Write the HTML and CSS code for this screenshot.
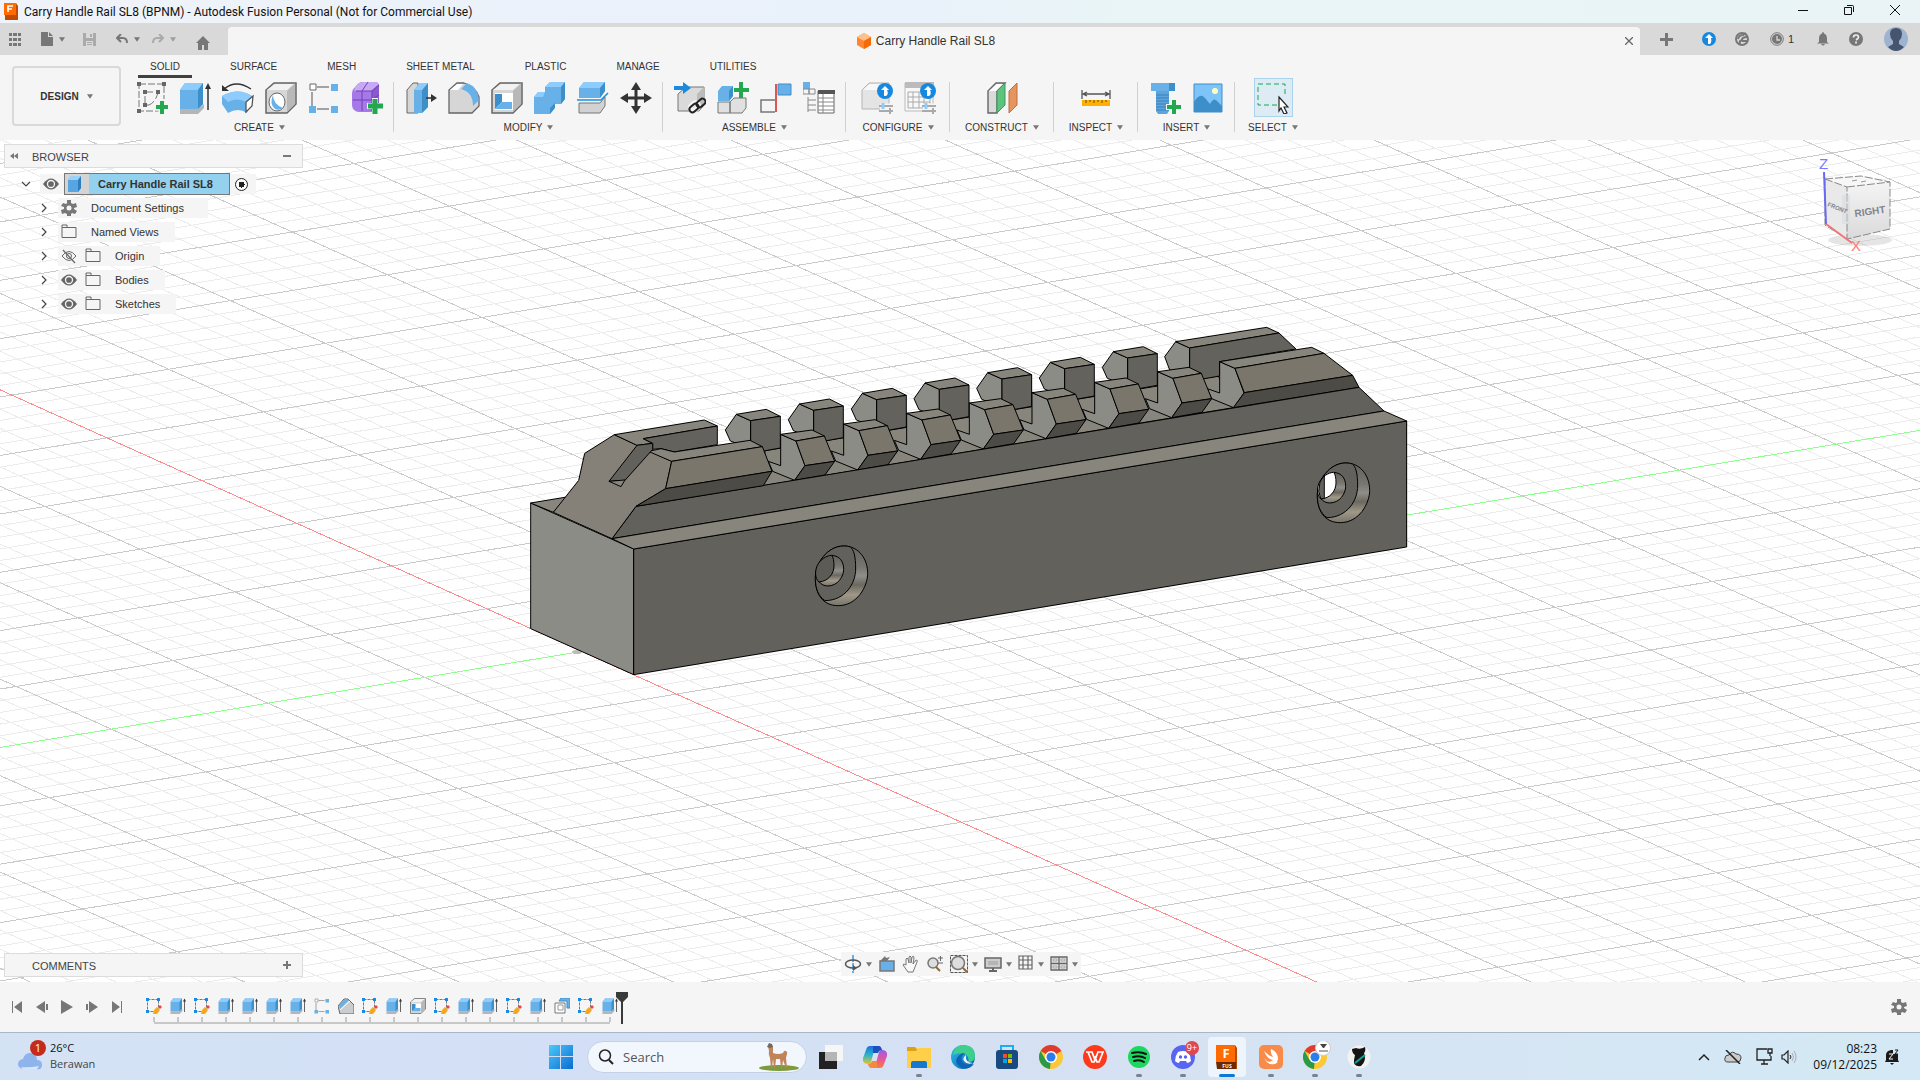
FILE: index.html
```html
<!DOCTYPE html>
<html lang="en">
<head>
<meta charset="utf-8">
<title>Carry Handle Rail SL8 (BPNM) - Autodesk Fusion Personal</title>
<link rel="stylesheet" href="styles.css">
</head>
<body>
<svg class="sprite" aria-hidden="true">
  <defs>
    <linearGradient id="g-blue" x1="0" y1="0" x2="1" y2="1"><stop offset="0" stop-color="#4cc9fb"/><stop offset="1" stop-color="#0a6cd0"/></linearGradient>
    <linearGradient id="g-edge" x1="0" y1="0" x2="1" y2="1"><stop offset="0" stop-color="#2cc3f0"/><stop offset="1" stop-color="#0b59a8"/></linearGradient>
    <linearGradient id="g-copa" x1="0" y1="0" x2="0" y2="1"><stop offset="0" stop-color="#1b6fe0"/><stop offset=".5" stop-color="#2bb5c9"/><stop offset="1" stop-color="#e8c62a"/></linearGradient>
    <linearGradient id="g-copb" x1="0" y1="0" x2="0" y2="1"><stop offset="0" stop-color="#9a5be8"/><stop offset=".5" stop-color="#e2569b"/><stop offset="1" stop-color="#ff7a3c"/></linearGradient>
    <linearGradient id="g-cube" x1="0" y1="0" x2="0" y2="1"><stop offset="0" stop-color="#f4f4f4"/><stop offset="1" stop-color="#dadada"/></linearGradient>
    <linearGradient id="g-bore" x1="0" y1="0" x2="0" y2="1"><stop offset="0" stop-color="#62615b"/><stop offset=".35" stop-color="#77766f"/><stop offset=".5" stop-color="#8f8f8a"/><stop offset=".65" stop-color="#6c6860"/><stop offset=".82" stop-color="#a09888"/><stop offset="1" stop-color="#77746c"/></linearGradient>
  </defs>
  <symbol id="i-extrude" viewBox="0 0 32 32"><path d="M1 27h18l6-5v4l-6 6H1z" fill="#b5b5b5"/><path d="M1 8l5-7h18v21l-5 5H1z" fill="#68b0e8"/><path d="M1 8l5-7h18l-5 7z" fill="#8dccfc"/><path d="M19 8l5-7v21l-5 5z" fill="#3d8fca"/><path d="M29 28V3" stroke="#333" stroke-width="1.500"/><path d="M26 7l3-6 3 6z" fill="#333"/></symbol>
  <symbol id="i-sketch" viewBox="0 0 32 32"><path d="M3 2h25v27H3z" fill="none" stroke="#777" stroke-dasharray="7 2"/><path d="M9 23V10h13q-2 10-9 13z" fill="none" stroke="#777" stroke-dasharray="9 3"/><path d="M1 0h4v4H1zM26 0h4v4h-4zM1 27h4v4H1zM7 8h4v4H7zM20 8h4v4h-4zM7 21h4v4H7z" fill="#666"/><path d="M18 25h14M26 17v15" stroke="#f5f5f5" stroke-width="7"/><path d="M20 25h12M26 19v13" stroke="#22a94f" stroke-width="4"/></symbol>
  <symbol id="i-revolve" viewBox="0 0 32 32"><path d="M0 14q16-9 30 0l-5 17q-9-6-19 0L0 22z" fill="#68b0e8"/><path d="M0 14q16-9 30 0l-6 6q-9-5-18 0z" fill="#8dccfc"/><path d="M24 20l7-6-1 10-6 6z" fill="#fff" stroke="#555" stroke-width="1.300"/><path d="M2 7Q14-3 29 7" fill="none" stroke="#333" stroke-width="1.300"/><path d="M0 3v6h7z" fill="#333"/></symbol>
  <symbol id="i-hole" viewBox="0 0 32 32"><path d="M1 8l8-7h22v21l-9 9H1z" fill="#d6d6d6" stroke="#666" stroke-width="1.500"/><path d="M22 9l8-8v21l-8 8z" fill="#b8b8b8"/><path d="M2 8l8-6h19l-7 6z" fill="#f2f2f2"/><ellipse cx="12" cy="20" rx="8" ry="9" fill="#fff" stroke="#666"/><path d="M8 13q0 9 10 13-4 3-8 1-6-5-2-14z" fill="#68b0e8"/></symbol>
  <symbol id="i-pattern" viewBox="0 0 32 32"><path d="M9 5h12M4 10v14M9 27h12" stroke="#888" fill="none" stroke-width="1.500"/><path d="M2 2h6v6H2z" fill="#fff" stroke="#666"/><path d="M23 2h7v7h-7zM1 24h7v7H1zM23 24h7v7h-7z" fill="#68b0e8"/></symbol>
  <symbol id="i-form" viewBox="0 0 32 32"><rect x="1" y="4" width="26" height="26" rx="7" fill="#a678e8"/><path d="M3 8q3-8 9-8h12q5 0 4 7v14l-7 8V9z" fill="#8a5bd0"/><path d="M3 8q3-8 9-8h12q4 0 3 3l-7 6H4z" fill="#c9a8f6"/><path d="M2 18h18l8-5M11 9v20M11 9l6-9M21 9v20M5 9h16l7-6" fill="none" stroke="#6f42b5"/><path d="M16 24h16M24 16v16" stroke="#f5f5f5" stroke-width="6"/><path d="M17 24h15M24 17v15" stroke="#22a94f" stroke-width="5"/></symbol>
  <symbol id="i-press" viewBox="0 0 32 32"><path d="M2 8l6-7h5v30H2z" fill="#d6d6d6" stroke="#666"/><path d="M9 8l6-7h8v24l-6 6H9z" fill="#68b0e8"/><path d="M17 8l6-7v24l-6 6z" fill="#3d8fca"/><path d="M9 8l6-7h8l-6 7z" fill="#8dccfc"/><path d="M21 16h7" stroke="#333" stroke-width="1.500"/><path d="M26 12l6 4-6 4z" fill="#333"/></symbol>
  <symbol id="i-fillet" viewBox="0 0 32 32"><path d="M1 8l8-7h7q12 4 15 14v9l-7 7H1z" fill="#d6d6d6" stroke="#666" stroke-width="1.300"/><path d="M13 7l6-6q11 4 12 17l-6 6Q25 10 13 7z" fill="#68b0e8"/><path d="M2 8l7-6h6l-5 6z" fill="#fff"/></symbol>
  <symbol id="i-shell" viewBox="0 0 32 32"><path d="M1 8l8-7h22v21l-9 9H1z" fill="#d6d6d6" stroke="#666" stroke-width="1.500"/><path d="M22 9l8-8v21l-8 8z" fill="#b8b8b8"/><path d="M2 8l8-6h19l-7 6z" fill="#f2f2f2"/><path d="M4 11h18v17H4z" fill="#fff"/><path d="M4 12h7v8l-7 7z" fill="#3d8fca"/><path d="M4 27l7-7h10v7z" fill="#68b0e8"/></symbol>
  <symbol id="i-combine" viewBox="0 0 32 32"><path d="M0 15l4-5h7V5l5-5h15v17l-4 5h-7v5l-4 5H0z" fill="#68b0e8"/><path d="M0 15l4-5h7L9 15zM11 5l5-5h15l-4 5z" fill="#8dccfc"/><path d="M27 5l4-5v17l-4 5zM16 26l5-5v5l-5 6z" fill="#3d8fca"/></symbol>
  <symbol id="i-split" viewBox="0 0 32 32"><path d="M2 6l5-6h21v9l-5 7H2z" fill="#68b0e8"/><path d="M2 6l5-6h21l-5 6z" fill="#8dccfc"/><path d="M23 6l5-6v9l-5 7z" fill="#3d8fca"/><path d="M0 18h24l7-7" fill="none" stroke="#1593e8" stroke-width="1.500"/><path d="M2 21h21l5-6v9l-5 7H2z" fill="#d2d2d2" stroke="#777"/></symbol>
  <symbol id="i-move" viewBox="0 0 32 32"><path d="M16 3v26M3 16h26" stroke="#333" stroke-width="3"/><path d="M16 0l5 8H11zM16 32l5-8H11zM0 16l8-5v10zM32 16l-8-5v10z" fill="#333"/></symbol>
  <symbol id="i-insertc" viewBox="0 0 32 32"><path d="M4 12l8-7h18v18l-5 6H4z" fill="#dadada" stroke="#777"/><path d="M23 12l7-7v18l-7 6z" fill="#bbb"/><path d="M0 4h9V0l8 6-8 6V8H0z" fill="#1a8ae0"/><g fill="none" stroke="#f5f5f5" stroke-width="5"><rect x="16" y="22" width="9" height="6" rx="3" transform="rotate(-40 20 25)"/></g><g fill="none" stroke="#222" stroke-width="2"><rect x="15" y="23" width="10" height="6" rx="3" transform="rotate(-42 20 26)"/><rect x="22" y="18" width="10" height="6" rx="3" transform="rotate(-42 27 21)"/></g></symbol>
  <symbol id="i-newcomp" viewBox="0 0 32 32"><path d="M1 20h12v11H1zM13 20l4-4h12v10l-4 5H13z" fill="#e0e0e0" stroke="#777"/><path d="M1 9l4-5h11v10l-4 5H1z" fill="#68b0e8"/><path d="M12 9l4-5v10l-4 5z" fill="#3d8fca"/><path d="M17 8h15M24 0v16" stroke="#22a94f" stroke-width="4"/></symbol>
  <symbol id="i-joint" viewBox="0 0 32 32"><path d="M15 18H1v12h14" fill="none" stroke="#777" stroke-width="1.500"/><path d="M16 2v28" stroke="#d32020" stroke-width="1.500"/><path d="M18 2h13v11H18z" fill="#68b0e8" stroke="#3d8fca"/></symbol>
  <symbol id="i-bom" viewBox="0 0 32 32"><path d="M0 0h7v7H0z" fill="#68b0e8"/><path d="M0 7h6v5H0zM6 7h6v5H6zM5 15v15M5 18h8M5 23h8M5 28h8" fill="none" stroke="#888"/><path d="M15 9h16v22H15z" fill="#fff" stroke="#666"/><path d="M15 8h17v4H15z" fill="#555"/><path d="M15 16h16M15 20h16M15 24h16M15 28h16M20 12v19" stroke="#888"/></symbol>
  <symbol id="i-conf1" viewBox="0 0 32 32"><path d="M1 8l7-7h20v26H1z" fill="#e4e4e4" stroke="#b5b5b5"/><path d="M2 8l7-6h15l-4 6z" fill="#f8f8f8"/><circle cx="24" cy="9" r="8" fill="#1788e0"/><path d="M23 14V8h-3l4-4 4 4h-2q2 4-1 6z" fill="#fff"/><path d="M19 24h13M19 29h13" stroke="#f5f5f5" stroke-width="5"/><path d="M18 24h14M18 29h14M29 26v6" stroke="#aaa" stroke-width="2"/><path d="M22 21v6" stroke="#8dccfc" stroke-width="3"/></symbol>
  <symbol id="i-conf2" viewBox="0 0 32 32"><path d="M1 1h28v28H1z" fill="#f8f8f8" stroke="#bbb"/><path d="M1 0h29v6H1z" fill="#bbb"/><path d="M4 10h22v16H4zM4 15h22M4 20h22M9 10v16M15 10v16M20 10v16" fill="none" stroke="#aaa"/><circle cx="24" cy="9" r="8" fill="#1788e0"/><path d="M23 14V8h-3l4-4 4 4h-2q2 4-1 6z" fill="#fff"/><path d="M19 24h13M19 29h13" stroke="#f5f5f5" stroke-width="5"/><path d="M18 24h14M18 29h14M29 26v6" stroke="#aaa" stroke-width="2"/><path d="M22 21v6" stroke="#8dccfc" stroke-width="3"/></symbol>
  <symbol id="i-construct" viewBox="0 0 32 32"><path d="M2 9l8-8h9l-8 8v22H2z" fill="#dadada" stroke="#666" stroke-width="1.400"/><path d="M3 9l8-7h6l-7 7z" fill="#fff"/><path d="M11 9l8-8v22l-8 8z" fill="#5cc47c" stroke="#3a9a5a"/><path d="M23 9l8-8v22l-8 8z" fill="#e8945e" stroke="#b9713f"/></symbol>
  <symbol id="i-measure" viewBox="0 0 32 32"><path d="M2 8v9M30 8v9M4 12h24M7 10l-4 2 4 2M25 10l4 2-4 2" fill="none" stroke="#555" stroke-width="1.300"/><path d="M2 18h28v6H2z" fill="#ffb000"/><path d="M6 18v3M10 18v2M14 18v3M18 18v2M22 18v3M26 18v2" stroke="#6a4a00"/></symbol>
  <symbol id="i-bolt" viewBox="0 0 32 32"><path d="M2 1h24v8H2z" fill="#3d8fca"/><path d="M2 1h18v8H2z" fill="#68b0e8"/><path d="M7 9h13v20l-2 3H9l-2-3z" fill="#5ba4dc"/><path d="M7 13h13M7 16h13M7 19h13M7 22h13M7 25h13M7 28h13" stroke="#3d80b8"/><path d="M17 25h15M25 18v14" stroke="#f5f5f5" stroke-width="6"/><path d="M18 25h14M25 18v14" stroke="#22a94f" stroke-width="4"/></symbol>
  <symbol id="i-image" viewBox="0 0 32 32"><path d="M2 2h28v28H2z" fill="#7fc4f8" stroke="#3d8fca"/><circle cx="23" cy="9" r="3" fill="#ffffc0"/><path d="M2 20q6-10 11-4l5 6q4-8 8-2l4 4v6H2z" fill="#3d8fca"/></symbol>
  <symbol id="i-select" viewBox="0 0 32 32"><path d="M1 2h27v21H1z" fill="none" stroke="#12ab50" stroke-dasharray="5 3"/><path d="M21 13h11v19H21z" fill="#dcebf4"/><path d="M22 15l9 10h-4l3 6-3 1-3-6-2 3z" fill="#fff" stroke="#222" stroke-width="1.200"/></symbol>
  <symbol id="t-sketch" viewBox="0 0 16 16"><path d="M1.500 1.500h11v12h-11z" fill="none" stroke="#777" stroke-dasharray="3 1"/><path d="M0 0h3v3H0zM11 0h3v3h-3zM0 12h3v3H0z" fill="#1a8ae0"/><path d="M7 16l1-4 3-3 3 3-3 4z" fill="#f5a81c"/><path d="M12 9l2-2 2 2-2 2z" fill="#e44"/></symbol>
  <symbol id="t-chamfer" viewBox="0 0 16 16"><path d="M0 8l6-7h4l6 6v9H2z" fill="#ccc" stroke="#666"/><path d="M2 11l9-9-4-1-6 6z" fill="#68b0e8"/><path d="M2 12L12 3" stroke="#fff"/></symbol>
  <symbol id="t-offset" viewBox="0 0 16 16"><path d="M7 0h9v10h-3V3H5z" fill="#68b0e8" stroke="#3d8fca"/><path d="M1 5h10v10H1z" fill="#fff" stroke="#777"/><path d="M4 7h5v5H4z" fill="none" stroke="#999"/></symbol>
  <symbol id="i-folder" viewBox="0 0 16 16"><path d="M1 3.500h14v10H1zM1 3.500V1h5v2.500" fill="none" stroke="#666"/></symbol>
  <symbol id="i-eye" viewBox="0 0 16 16"><path d="M0 8q8-11 16 0-8 11-16 0z" fill="#666"/><circle cx="8" cy="8" r="3.500" fill="none" stroke="#f5f5f5" stroke-width="1.300"/></symbol>
  <symbol id="i-eyeoff" viewBox="0 0 16 16"><path d="M1 8q7-9 14 0-7 9-14 0z" fill="none" stroke="#666"/><circle cx="8" cy="8" r="2.500" fill="none" stroke="#666"/><path d="M2 2l12 13" stroke="#666" stroke-width="1.200"/></symbol>
  <symbol id="i-gear" viewBox="0 0 16 16"><path d="M6 0h4v3l2 1 3-1 1 4-3 1v1l3 2-2 3-3-1-1 1v2H6v-2l-2-1-3 1-1-4 3-1V7L0 6l2-3 3 1 1-1z" fill="#777"/><circle cx="8" cy="8" r="2.500" fill="#f5f5f5"/></symbol>
  <symbol id="i-chev" viewBox="0 0 8 12"><path d="M2 2l4 4-4 4" fill="none" stroke="#444" stroke-width="1.200"/></symbol>
  <symbol id="i-down" viewBox="0 0 8 6"><path d="M0 0h8L4 6z" fill="#777"/></symbol>
  <symbol id="i-chrome" viewBox="0 0 24 24"><circle cx="12" cy="12" r="12" fill="#fcc934"/><path d="M12 12L1.600 6a12 12 0 0 1 20.800 0z" fill="#e03b2f"/><path d="M12 12l-1 12A12 12 0 0 1 1.600 6l5 9z" fill="#2a9a48"/><circle cx="12" cy="12" r="6" fill="#fff"/><circle cx="12" cy="12" r="4.500" fill="#2c7de9"/></symbol>
</svg>

<div class="app">
  <header class="titlebar">
    <svg class="applogo" viewBox="0 0 14 17"><path d="M1 0h11l2 3v14H1z" fill="#c24a00"/><path d="M0 0h12v12H0z" fill="#ff6b00"/><path d="M4 9V3h5M4 6h4" stroke="#fff" stroke-width="1.600" fill="none"/></svg>
    <h1>Carry Handle Rail SL8 (BPNM) - Autodesk Fusion Personal (Not for Commercial Use)</h1>
    <div class="winctl">
      <button aria-label="Minimize"><svg viewBox="0 0 10 10"><path d="M0 5.500h10" stroke="#111"/></svg></button>
      <button aria-label="Restore"><svg viewBox="0 0 10 10"><path d="M.5 2.500h7v7h-7zM3 .5h5.500q1 0 1 1V7" fill="none" stroke="#111"/></svg></button>
      <button aria-label="Close"><svg viewBox="0 0 10 10"><path d="M0 0l10 10M10 0L0 10" stroke="#111"/></svg></button>
    </div>
  </header>

  <div class="tabbar">
    <div class="quick">
      <button aria-label="Data panel"><svg width="12" height="13" viewBox="0 0 12 13"><path d="M0 0h3v3H0zM4 0h4v3H4zM9 0h3v3H9zM0 5h3v3H0zM4 5h4v3H4zM9 5h3v3H9zM0 10h3v3H0zM4 10h4v3H4zM9 10h3v3H9z" fill="#777"/></svg></button>
      <button class="q-file" aria-label="File"><svg width="12" height="14" viewBox="0 0 12 14"><path d="M0 0h7v5h5v9H0zM8 0l4 4H8z" fill="#777"/></svg><svg class="dd"><use href="#i-down"/></svg></button>
      <button class="q-save" aria-label="Save"><svg width="13" height="13" viewBox="0 0 13 13"><path d="M0 0h13v13H0z" fill="#aaa"/><path d="M3 0h7v5H3zM3 8h7v5H3z" fill="#d9d9d9"/><path d="M7 1h2v3H7zM4 9h5v1H4zM4 11h5v1H4z" fill="#aaa"/></svg></button>
      <button class="q-undo" aria-label="Undo"><svg width="12" height="10" viewBox="0 0 12 10"><path d="M2 4h5q4 0 4 5M5 0L1 4l4 4" fill="none" stroke="#777" stroke-width="2"/></svg><svg class="dd"><use href="#i-down"/></svg></button>
      <button class="q-redo" aria-label="Redo"><svg width="12" height="10" viewBox="0 0 12 10"><path d="M10 4H5Q1 4 1 9M7 0l4 4-4 4" fill="none" stroke="#aaa" stroke-width="2"/></svg><svg class="dd faded"><use href="#i-down"/></svg></button>
      <button class="q-home" aria-label="Home"><svg width="14" height="14" viewBox="0 0 14 14"><path d="M7 0l7 7h-2v7H8V9H6v5H2V7H0z" fill="#777"/></svg></button>
    </div>
    <div class="doctab">
      <svg width="14" height="16" viewBox="0 0 14 16"><path d="M7 0l7 4v8l-7 4-7-4V4z" fill="#ff8533"/><path d="M7 0l7 4-7 4-7-4z" fill="#ffc090"/><path d="M7 8l7-4v8l-7 4z" fill="#f96a05"/></svg>
      <span>Carry Handle Rail SL8</span>
      <button class="tabclose" aria-label="Close tab"><svg width="8" height="8" viewBox="0 0 8 8"><path d="M0 0l8 8M8 0L0 8" stroke="#666" stroke-width="1.300"/></svg></button>
    </div>
    <div class="status">
      <button class="c-plus" aria-label="New tab"><svg width="13" height="13" viewBox="0 0 13 13"><path d="M0 6.500h13M6.500 0v13" stroke="#777" stroke-width="3"/></svg></button>
      <button aria-label="Updates"><svg width="14" height="14" viewBox="0 0 14 14"><circle cx="7" cy="7" r="7" fill="#1788e0"/><path d="M6 12V6H3l4-4 4 4H9q1 4-1 6z" fill="#fff"/></svg></button>
      <button aria-label="Extensions"><svg width="14" height="14" viewBox="0 0 14 14"><circle cx="7" cy="7" r="6" fill="none" stroke="#777" stroke-width="2"/><path d="M3 7q1-4 5-4l3-2M7 8q0-3 5-3M5 12q-1-5 3-3l5 0" fill="none" stroke="#777" stroke-width="2"/></svg></button>
      <button class="c-jobs" aria-label="Job status"><svg width="14" height="14" viewBox="0 0 14 14"><circle cx="7" cy="7" r="6.300" fill="none" stroke="#777"/><circle cx="7" cy="7" r="5" fill="#777"/><path d="M7 4v4h3" fill="none" stroke="#d9d9d9" stroke-width="1.300"/></svg><span>1</span></button>
      <button aria-label="Notifications"><svg width="12" height="14" viewBox="0 0 12 14"><path d="M6 0q1 0 1 1.500 3 1 3 5V10l2 1.500H0L2 10V6.500q0-4 3-5Q5 0 6 0zM4 12h4q-2 3-4 0z" fill="#777"/></svg></button>
      <button aria-label="Help"><svg width="14" height="14" viewBox="0 0 14 14"><circle cx="7" cy="7" r="7" fill="#777"/><path d="M4.500 5.500Q4.500 3 7 3t2.500 2.300Q9.500 6.500 7 8M7 9.500v2" fill="none" stroke="#eee" stroke-width="1.700"/></svg></button>
      <button class="c-user" aria-label="Account"><svg width="24" height="24" viewBox="0 0 24 24"><circle cx="12" cy="12" r="12" fill="#9eb3d0"/><path d="M12 1q6 0 6 6 0 4-3 7v3l5 3q-4 4-8 4t-8-4l5-3v-3Q6 11 6 7q0-6 6-6z" fill="#46546e"/></svg></button>
    </div>
  </div>

  <section class="ribbon">
    <button class="workspace">DESIGN <svg class="dd"><use href="#i-down"/></svg></button>
    <div class="ribmain">
      <nav class="ribtabs">
        <button class="on">SOLID</button><button>SURFACE</button><button>MESH</button><button>SHEET METAL</button><button>PLASTIC</button><button>MANAGE</button><button>UTILITIES</button>
      </nav>
      <div class="groups">
        <div class="group g-create"><div class="tools">
          <button aria-label="Create sketch"><svg><use href="#i-sketch"/></svg></button><button aria-label="Extrude"><svg><use href="#i-extrude"/></svg></button><button aria-label="Revolve"><svg><use href="#i-revolve"/></svg></button><button aria-label="Hole"><svg><use href="#i-hole"/></svg></button><button aria-label="Pattern"><svg><use href="#i-pattern"/></svg></button><button aria-label="Create form"><svg><use href="#i-form"/></svg></button></div>
          <button class="glabel">CREATE <svg class="dd"><use href="#i-down"/></svg></button></div>
        <div class="group g-modify"><div class="tools">
          <button aria-label="Press pull"><svg><use href="#i-press"/></svg></button><button aria-label="Fillet"><svg><use href="#i-fillet"/></svg></button><button aria-label="Shell"><svg><use href="#i-shell"/></svg></button><button aria-label="Combine"><svg><use href="#i-combine"/></svg></button><button aria-label="Split body"><svg><use href="#i-split"/></svg></button><button aria-label="Move"><svg><use href="#i-move"/></svg></button></div>
          <button class="glabel">MODIFY <svg class="dd"><use href="#i-down"/></svg></button></div>
        <div class="group g-assemble"><div class="tools">
          <button aria-label="Insert component"><svg><use href="#i-insertc"/></svg></button><button aria-label="New component"><svg><use href="#i-newcomp"/></svg></button><button aria-label="Joint"><svg><use href="#i-joint"/></svg></button><button aria-label="Bill of materials"><svg><use href="#i-bom"/></svg></button></div>
          <button class="glabel">ASSEMBLE <svg class="dd"><use href="#i-down"/></svg></button></div>
        <div class="group g-configure"><div class="tools">
          <button aria-label="Configure"><svg><use href="#i-conf1"/></svg></button><button aria-label="Configuration table"><svg><use href="#i-conf2"/></svg></button></div>
          <button class="glabel">CONFIGURE <svg class="dd"><use href="#i-down"/></svg></button></div>
        <div class="group g-construct"><div class="tools"><button aria-label="Offset plane"><svg><use href="#i-construct"/></svg></button></div>
          <button class="glabel">CONSTRUCT <svg class="dd"><use href="#i-down"/></svg></button></div>
        <div class="group g-inspect"><div class="tools"><button aria-label="Measure"><svg><use href="#i-measure"/></svg></button></div>
          <button class="glabel">INSPECT <svg class="dd"><use href="#i-down"/></svg></button></div>
        <div class="group g-insert"><div class="tools"><button aria-label="Insert fastener"><svg><use href="#i-bolt"/></svg></button><button aria-label="Canvas"><svg><use href="#i-image"/></svg></button></div>
          <button class="glabel">INSERT <svg class="dd"><use href="#i-down"/></svg></button></div>
        <div class="group g-select"><div class="tools"><button class="active" aria-label="Select"><svg><use href="#i-select"/></svg></button></div>
          <button class="glabel">SELECT <svg class="dd"><use href="#i-down"/></svg></button></div>
      </div>
    </div>
  </section>

  <main class="viewport">
    <svg class="scene" viewBox="0 140 1920 842" preserveAspectRatio="xMinYMin slice">
      <defs>
        <g id="back-tooth">
          <path d="M676 390l33-47 43 19v85l-61-24z" fill="#8b8c85"/><path d="M709 343l90-15 42 21-89 13z" fill="#88867c"/><path d="M752 362l89-13v95l-89 16z" fill="#63625c"/>
        </g>
        <g id="front-face"><path d="M842 403l46 20 27 74-31 44-66-27-13-30 37 13z" fill="#8b8c85"/></g>
        <g id="front-tooth">
          <use href="#front-face"/>
          <path d="M842 403l94-13 37 18-85 15z" fill="#88867c"/><path d="M888 423l85-15 31 76-89 13z" fill="#7a766b"/><path d="M915 497l89-13-29 41-91 16z" fill="#4d4b45"/>
        </g>
        <g id="bore">
          <path d="M1031 738c48 0 72 42 72 82s-32 97-88 97c-48 0-69-36-69-82s37-97 85-97z" fill="url(#g-bore)"/>
          <path d="M1031 738q14 0 20 3c10 8 16 26 16 66 0 42-30 94-92 95-20-14-29-36-29-67 0-46 37-97 85-97z" fill="#62615b"/>
          <path d="M995 766c26 2 36 20 36 42s-18 50-48 50c-10 0-20-5-26-13" fill="url(#g-bore)"/>
          <path d="M995 766c5 6 7 17 7 32 0 24-18 46-45 48-14-12-12-36-4-52 8-14 24-27 42-28z" class="bore-hole"/>
        </g>
      </defs>
      <rect x="0" y="140" width="1920" height="842" fill="#fff"/>
      <g class="grid"><path id="grid-minor" class="minor"/><path id="grid-major" class="major"/><path id="axis-x" class="axis-x"/><path id="axis-y" class="axis-y"/></g>
      <ellipse cx="577" cy="652" rx="5" ry="2" fill="#bbb"/>
      <g class="body" transform="translate(500 300) scale(.33333)">
        <path d="M92 609l309 138v377L92 986z" fill="#8b8c85"/>
        <path d="M401 747l2319-384v378L401 1124z" fill="#62615b"/>
        <path d="M92 609l108-18-40 46z" fill="#88867c"/>
        <path d="M790 557l1410-234-45-95L795 452z" fill="#88867c"/>
        <use href="#back-tooth" x="1131" y="-188"/><use href="#back-tooth" x="942" y="-156"/><use href="#back-tooth" x="754" y="-125"/><use href="#back-tooth" x="566" y="-94"/><use href="#back-tooth" x="378" y="-63"/><use href="#back-tooth" x="189" y="-31"/><use href="#back-tooth"/>
        <path d="M1994 170l33-45 42 19v85l-60-19z" fill="#8b8c85"/>
        <path d="M2027 125l273-43 37 17-268 45z" fill="#88867c"/>
        <path d="M2069 144l268-45 51 48-229 38v43l-90 16z" fill="#63625c"/>
        <use href="#front-face" x="1317" y="-218"/>
        <path d="M2159 185l276-43 37 18-267 45z" fill="#88867c"/>
        <path d="M2205 205l267-45 86 66-325 52z" fill="#7a766b"/>
        <path d="M2233 278l325-52 19 36-377 61z" fill="#4d4b45"/>
        <use href="#front-tooth" x="1131" y="-188"/><use href="#front-tooth" x="942" y="-156"/><use href="#front-tooth" x="754" y="-125"/><use href="#front-tooth" x="566" y="-94"/><use href="#front-tooth" x="378" y="-63"/><use href="#front-tooth" x="189" y="-31"/><use href="#front-tooth"/>
        <path d="M336 716l72-97 2169-357 75 71z" fill="#62615b"/>
        <path d="M336 716l2316-383 68 30L401 747z" fill="#88867c"/>
        <path d="M160 637l76-96 18-81 89-56 172 80-18 82-89 53-72 97z" fill="#868178"/>
        <path d="M343 404l270-44 39 18-222 38 28 14-47 6z" fill="#88867c"/>
        <path d="M430 416l222-38v56l-129 22-40-10-25 2v-18z" fill="#63625c"/>
        <path d="M445 454l38-8 40 10 227-35 37 19-272 44z" fill="#88867c"/>
        <path d="M515 484l272-44 29 74-319 52z" fill="#7a766b"/>
        <path d="M497 566l319-52-26 43-382 62z" fill="#4d4b45"/>
        <path d="M411 436l47-6v18l-83 93-48 3z" fill="#62615b"/>
        <path d="M327 544l48-4-12 20z" fill="#88867c"/>
        <use href="#bore" class="blind"/><use href="#bore" class="through" x="1506" y="-249"/>
        <path d="M2473 526l-13 20-4 28 6 22h11z" fill="#62615b"/>
      </g>
    </svg>

    <svg class="viewcube" viewBox="0 0 90 110">
      <ellipse cx="50" cy="90" rx="32" ry="6" fill="#000" opacity=".1"/>
      <path d="M15 29l22 8v52L15 75z" fill="#e9e9e9"/><path d="M37 37l43-5v47l-43 10z" fill="url(#g-cube)"/><path d="M15 29l36-3 29 6-43 5z" fill="#f7f7f7"/>
      <path d="M15 29l22 8v52L15 75zM37 37l43-5v47l-43 10M15 29l36-3 29 6" fill="none" stroke="#888" stroke-dasharray="8 2"/>
      <path d="M32 45h8v29h-8z" fill="#d5d9de" opacity=".5"/>
      <path d="M14 22l2 52" stroke="#6a6af0" stroke-width="2"/><path d="M16 74l26 19" stroke="#f07878" stroke-width="2"/>
      <text x="9" y="19" class="ax z">Z</text><text x="41" y="101" class="ax x">X</text>
      <text x="45" y="67" class="face" transform="rotate(-8 45 67)">RIGHT</text>
      <text x="17" y="56" class="face small" transform="rotate(22 17 56)">FRONT</text>
      <path d="M42 31l5-1M51 32l5-1" stroke="#999"/>
    </svg>

    <aside class="browser">
      <div class="panelhead"><svg width="8" height="6" viewBox="0 0 8 6"><path d="M4 0v6L0 3zM8 0v6L4 3z" fill="#777"/></svg><h2>BROWSER</h2><button aria-label="Collapse"><svg width="8" height="8" viewBox="0 0 8 8"><path d="M0 4h8" stroke="#777" stroke-width="2"/></svg></button></div>
      <ul class="tree">
        <li class="root"><svg class="chev open"><use href="#i-chev"/></svg><div class="rowbg"><svg class="ic"><use href="#i-eye"/></svg><div class="sel"><span class="cubebox"><svg width="16" height="16" viewBox="0 0 16 16"><path d="M1 4l3-4h10v12l-3 4H1z" fill="#57a5e3"/><path d="M1 4l3-4h10l-3 4z" fill="#9bd2fb"/><path d="M11 4l3-4v12l-3 4z" fill="#2e7fc0"/></svg></span><b>Carry Handle Rail SL8</b></div><input type="radio" checked aria-label="Activate component"></div></li>
        <li><svg class="chev"><use href="#i-chev"/></svg><div class="rowbg"><svg class="ic"><use href="#i-gear"/></svg><span>Document Settings</span></div></li>
        <li><svg class="chev"><use href="#i-chev"/></svg><div class="rowbg short"><svg class="ic"><use href="#i-folder"/></svg><span>Named Views</span></div></li>
        <li><svg class="chev"><use href="#i-chev"/></svg><div class="rowbg short"><svg class="ic"><use href="#i-eyeoff"/></svg><svg class="ic"><use href="#i-folder"/></svg><span>Origin</span></div></li>
        <li><svg class="chev"><use href="#i-chev"/></svg><div class="rowbg short"><svg class="ic"><use href="#i-eye"/></svg><svg class="ic"><use href="#i-folder"/></svg><span>Bodies</span></div></li>
        <li><svg class="chev"><use href="#i-chev"/></svg><div class="rowbg short"><svg class="ic"><use href="#i-eye"/></svg><svg class="ic"><use href="#i-folder"/></svg><span>Sketches</span></div></li>
      </ul>
    </aside>

    <div class="comments panelhead"><h2>COMMENTS</h2><button aria-label="Add comment"><svg width="8" height="8" viewBox="0 0 8 8"><path d="M0 4h8M4 0v8" stroke="#777" stroke-width="2"/></svg></button></div>

    <div class="navbar">
      <button aria-label="Orbit"><svg width="18" height="18" viewBox="0 0 18 18"><path d="M9 0v18" stroke="#68b0e8" stroke-width="2" stroke-dasharray="7 1"/><ellipse cx="9" cy="9" rx="7.500" ry="4" fill="none" stroke="#555" stroke-width="1.500"/><path d="M9 10v6l4-3z" fill="#555"/></svg><svg class="dd"><use href="#i-down"/></svg></button>
      <button aria-label="Look at"><svg width="18" height="18" viewBox="0 0 18 18"><path d="M2 6h14v10H2z" fill="#68b0e8" stroke="#777" stroke-width="1.500"/><path d="M2 6l5-5 1 2 4-1-3 4z" fill="#777"/></svg></button>
      <button aria-label="Pan"><svg width="18" height="18" viewBox="0 0 18 18"><path d="M6 17L1 10q0-2 3 0V4q1-2 2 0l1 4V2q1-2 2 0v6l1-6q2-2 2 1l-1 6 3-4q2 0 1 2l-4 10z" fill="#f8f8f8" stroke="#777"/></svg></button>
      <button aria-label="Zoom"><svg width="18" height="18" viewBox="0 0 18 18"><circle cx="7" cy="8" r="5" fill="#ddd" stroke="#777" stroke-width="1.500"/><path d="M10 12l4 4" stroke="#8a6a3a" stroke-width="2"/><path d="M12 3h5M14.500 1v5M12 8h5" stroke="#666"/></svg></button>
      <button aria-label="Fit"><svg width="18" height="18" viewBox="0 0 18 18"><path d="M.5.5h17v17H.5z" fill="none" stroke="#555" stroke-dasharray="3 1"/><circle cx="8" cy="8" r="6.500" fill="#ddd" stroke="#777" stroke-width="1.500"/><path d="M13 13l4 4" stroke="#8a6a3a" stroke-width="2"/></svg><svg class="dd"><use href="#i-down"/></svg></button>
      <button aria-label="Display settings"><svg width="18" height="18" viewBox="0 0 18 18"><path d="M1 3h16v10H1z" fill="#ccc" stroke="#666" stroke-width="1.500"/><path d="M4 6h10v4H4z" fill="#b5b5b5"/><path d="M9 13v3M5 16h8" stroke="#666" stroke-width="2"/></svg><svg class="dd"><use href="#i-down"/></svg></button>
      <button aria-label="Grid and snaps"><svg width="16" height="18" viewBox="0 0 16 18"><path d="M1 1h13v13H1zM1 5h13M1 10h13M5 1v13M10 1v13" fill="none" stroke="#666" stroke-width="1.200"/></svg><svg class="dd"><use href="#i-down"/></svg></button>
      <button aria-label="Viewports"><svg width="18" height="18" viewBox="0 0 18 18"><path d="M1 2h16v13H1zM9 2v13M1 8.500h16" fill="#e2e2e2" stroke="#666" stroke-width="1.300"/><path d="M3 4h4v2H3zM11 4h4v2h-4zM3 11h4v2H3zM11 11h4v2h-4z" fill="none" stroke="#aaa"/></svg><svg class="dd"><use href="#i-down"/></svg></button>
    </div>
  </main>

  <section class="timeline">
    <div class="transport">
      <button aria-label="Go to start"><svg viewBox="0 0 14 14"><path d="M2 1h1v12H2zM12 1v12L4 7z" fill="#777"/></svg></button>
      <button aria-label="Step back"><svg viewBox="0 0 14 14"><path d="M10 1v12L1 7zM11 4h2v6h-2z" fill="#777"/></svg></button>
      <button aria-label="Play"><svg viewBox="0 0 14 14"><path d="M1 0v14l12-7z" fill="#777"/></svg></button>
      <button aria-label="Step forward"><svg viewBox="0 0 14 14"><path d="M4 1v12l9-6zM1 4h2v6H1z" fill="#777"/></svg></button>
      <button aria-label="Go to end"><svg viewBox="0 0 14 14"><path d="M11 1h1v12h-1zM2 1v12l8-6z" fill="#777"/></svg></button>
    </div>
    <ol class="features">
      <li><svg><use href="#t-sketch"/></svg></li><li><svg><use href="#i-extrude"/></svg></li><li><svg><use href="#t-sketch"/></svg></li><li><svg><use href="#i-extrude"/></svg></li><li><svg><use href="#i-extrude"/></svg></li><li><svg><use href="#i-extrude"/></svg></li><li><svg><use href="#i-extrude"/></svg></li><li><svg><use href="#i-pattern"/></svg></li><li><svg><use href="#t-chamfer"/></svg></li><li><svg><use href="#t-sketch"/></svg></li><li><svg><use href="#i-extrude"/></svg></li><li><svg><use href="#i-shell"/></svg></li><li><svg><use href="#t-sketch"/></svg></li><li><svg><use href="#i-extrude"/></svg></li><li><svg><use href="#i-extrude"/></svg></li><li><svg><use href="#t-sketch"/></svg></li><li><svg><use href="#i-extrude"/></svg></li><li><svg><use href="#t-offset"/></svg></li><li><svg><use href="#t-sketch"/></svg></li><li><svg><use href="#i-extrude"/></svg></li>
    </ol>
    <svg class="marker" viewBox="0 0 12 32"><path d="M0 0h12v5L7 10v22H5V10L0 5z" fill="#3a3a3a"/></svg>
    <button class="settings" aria-label="Timeline settings"><svg width="16" height="16"><use href="#i-gear"/></svg></button>
  </section>

  <footer class="taskbar">
    <button class="weather"><svg width="30" height="32" viewBox="0 0 30 32"><path d="M5 29q-5-1-5-5t5-5q2-7 8-6t6 7q5 0 5 5t-5 4z" fill="#8fb4ec"/><path d="M3 27q8 1 18-1l-2 3H5z" fill="#d8e8fb"/><circle cx="20" cy="8" r="8" fill="#c42b1c"/><text x="20" y="12" text-anchor="middle" fill="#fff" font-size="11">1</text></svg><span>26°C<small>Berawan</small></span></button>
    <div class="apps">
      <button aria-label="Start"><svg viewBox="0 0 24 24"><path d="M0 0h11v11H0zM12 0h12v11H12zM0 12h11v12H0zM12 12h12v12H12z" fill="url(#g-blue)"/></svg></button>
      <label class="search"><svg width="16" height="16" viewBox="0 0 16 16"><circle cx="7" cy="6.500" r="5.500" fill="none" stroke="#222" stroke-width="1.500"/><path d="M11 11l4 4" stroke="#222" stroke-width="2"/></svg><input type="text" placeholder="Search" aria-label="Search"><svg width="40" height="28" viewBox="0 0 40 28"><ellipse cx="20" cy="25" rx="20" ry="3" fill="#7d9a3c"/><path d="M9 3l3-2 2 3v6q5 2 10 0 1-3 3-2 2 1 1 3l-1 4 1 10h-1l-3-8-1 8h-1l-1-9h-4l-1 9h-1l-1-9-1 9h-1l-1-10q-2-4-1-7z" fill="#c08458"/><path d="M8 4l2-4 3 1 1 3-3 1z" fill="#6e6a66"/></svg></label>
      <button aria-label="Task view"><svg viewBox="0 0 24 24"><path d="M6 0h18v16H6z" fill="#f6f6f6"/><path d="M0 7h18v17H0z" fill="#222"/><path d="M6 7h12v9H6z" fill="#b5b5b5"/></svg></button>
      <button aria-label="Copilot"><svg viewBox="0 0 24 24"><path d="M7 1h8q-3 1-4 5L8 17q-1 3-4 2-5-1-4-6L3 5q1-4 4-4z" fill="url(#g-copa)"/><path d="M17 23H9q3-1 4-5l3-11q1-3 4-2 5 1 4 6l-3 8q-1 4-4 4z" fill="url(#g-copb)"/><path d="M10 1h6q2 0 3 4-3 0-4 3h-5z" fill="#1b50c0"/><path d="M14 23H8q-2 0-3-4 3 0 4-3h5z" fill="#f78a3a"/></svg></button>
      <button class="run" aria-label="File Explorer"><svg viewBox="0 0 24 24"><path d="M0 2h8l3 3h13v18H0z" fill="#e0a010"/><path d="M0 6h9l2-3h13v20H0z" fill="#ffcf4a"/><path d="M4 23v-5q0-2 2-2h12q2 0 2 2v5z" fill="#1477d0"/></svg></button>
      <button aria-label="Edge"><svg viewBox="0 0 24 24"><circle cx="12" cy="12" r="12" fill="url(#g-edge)"/><path d="M12 0q12 0 12 11 0 6-7 6 2-5-3-8-5-2-12 1Q4 0 12 0z" fill="#3ecf8e"/><path d="M14 8q-5 3-3 8 3 6 12 3-5 6-12 4Q3 19 6 13q3-5 8-5z" fill="#0f62b5"/><path d="M15 10q-4 3-2 6 3 4 9 2-8 0-7-8z" fill="#e5f3ff"/></svg></button>
      <button aria-label="Microsoft Store"><svg viewBox="0 0 24 24"><path d="M6 6V1h12v5" fill="none" stroke="#1ab0f0" stroke-width="2"/><rect x="1" y="5" width="22" height="19" rx="3" fill="#174a80"/><path d="M8 9h4v4H8z" fill="#f25022"/><path d="M13 9h4v4h-4z" fill="#7fba00"/><path d="M8 14h4v4H8z" fill="#00a4ef"/><path d="M13 14h4v4h-4z" fill="#ffb900"/></svg></button>
      <button aria-label="Chrome"><svg><use href="#i-chrome"/></svg></button>
      <button aria-label="WPS Office"><svg viewBox="0 0 24 24"><circle cx="12" cy="12" r="12" fill="#ff3a1c"/><path d="M3 7h6l3 8 3-8h5l-4 10h-2l-2-6M5 7l4 10h2l2-6" fill="none" stroke="#fff" stroke-width="1.700"/></svg></button>
      <button class="run" aria-label="Spotify"><svg viewBox="0 0 24 24"><circle cx="12" cy="12" r="11" fill="#1ed760"/><path d="M5 8q8-2 14 1M6 12q7-2 12 1M7 16q6-2 10 1" fill="none" stroke="#111" stroke-width="2" stroke-linecap="round"/></svg></button>
      <button class="run" aria-label="Discord"><svg viewBox="0 0 28 28" class="big"><circle cx="12" cy="16" r="12" fill="#5865f2"/><path d="M7 11q5-2 10 0 3 4 3 9-2 2-4 2l-1-2h-6l-1 2q-2 0-4-2 0-5 3-9z" fill="#fff"/><circle cx="9.500" cy="16" r="1.700" fill="#5865f2"/><circle cx="14.500" cy="16" r="1.700" fill="#5865f2"/><circle cx="21" cy="7" r="7" fill="#e0484e"/><text x="21" y="10" text-anchor="middle" fill="#fff" font-size="9">9+</text></svg></button>
      <button class="run cur" aria-label="Fusion"><svg viewBox="0 0 24 24"><path d="M2 0h18l2 3v21H2z" fill="#b84a00"/><path d="M1 0h19v17H1z" fill="#ff6b00"/><path d="M1 17h20v7H2z" fill="#6b2a00"/><text x="11" y="13" text-anchor="middle" fill="#fff" font-size="13" font-weight="700">F</text><text x="12" y="23" text-anchor="middle" fill="#fff" font-size="5" font-weight="700">FUS</text></svg></button>
      <button class="run" aria-label="Swift"><svg viewBox="0 0 24 24"><rect width="24" height="24" rx="5" fill="#f88a4a"/><path d="M12 4q7 3 7 10l-1 3q-6 3-10 0 4 0 6-2-6-1-9-9 5 5 9 6-3-4-2-8z" fill="#fff"/><path d="M5 12q2 5 6 5l8 0-3 2q-8 2-11-7z" fill="#fff"/></svg></button>
      <button class="run" aria-label="Chrome profile"><svg viewBox="0 0 28 28" class="big"><use href="#i-chrome" y="4" width="24" height="24"/><circle cx="20" cy="7" r="7.500" fill="#fff" stroke="#ccc"/><path d="M17 3h7l-3 4h-1z" fill="#444"/><path d="M16 10h9" stroke="#555"/></svg></button>
      <button class="run" aria-label="Orca Slicer"><svg viewBox="0 0 24 24"><circle cx="12" cy="12" r="11.500" fill="#f2f2f2"/><path d="M5 4l4-1q4 2 9-1 1 4-1 6 3 8-3 13-8 1-7-6l1-5q-3-2-3-6z" fill="#151515"/><path d="M8 18l10-8" stroke="#0fa69a" stroke-width="2"/></svg></button>
    </div>
    <div class="tray">
      <svg width="12" height="8" viewBox="0 0 12 8"><path d="M1 7l5-5 5 5" fill="none" stroke="#222" stroke-width="1.500"/></svg>
      <svg width="18" height="14" viewBox="0 0 18 14"><path d="M4 12q-4 0-3-4 0-3 4-3 3-5 7-1 5 0 5 4 0 4-4 4z" fill="#ccc" stroke="#444"/><path d="M2 0l14 14" stroke="#222" stroke-width="1.500"/></svg>
      <svg width="17" height="17" viewBox="0 0 17 17"><path d="M11 1H1v11h14V8M5 16h7M8 12v4M12 1h4v4h-4zM14 5v3" fill="none" stroke="#222" stroke-width="1.300"/></svg>
      <svg width="16" height="14" viewBox="0 0 16 14"><path d="M1 5h2l4-4v12L3 9H1z" fill="none" stroke="#222" stroke-width="1.200"/><path d="M9 5q2 2 0 4" fill="none" stroke="#222"/><path d="M11 3q3 4 0 8M13 1q4 6 0 12" fill="none" stroke="#aab"/></svg>
      <time>08:23<br>09/12/2025</time>
      <svg width="14" height="16" viewBox="0 0 14 16"><path d="M0 13l1-2V6q0-4 5-5h2v4h5v6l1 2zM5 14h4l-2 2z" fill="#1a1a1a"/><path d="M4 5h4l-4 5h4" fill="none" stroke="#fff"/><path d="M10 1h3l-3 4h3" fill="none" stroke="#1a1a1a"/></svg>
    </div>
  </footer>
</div>
<script src="grid.js"></script>
</body>
</html>
```
FILE: styles.css
```css
* { box-sizing: border-box; }
body { margin: 0; font-family: "Liberation Sans", Arial, sans-serif; font-size: 11px; color: #333; }
button { padding: 0; border: 0; background: none; font: inherit; color: inherit; display: flex; align-items: center; justify-content: center; }
h1, h2, ul, ol { margin: 0; padding: 0; font-weight: 400; list-style: none; }
svg { display: block; flex: none; }
.sprite { position: absolute; width: 0; height: 0; }
.app { display: flex; flex-direction: column; height: 100vh; overflow: hidden; background: #f5f5f5; }
.dd { width: 6px; height: 5px; }
.faded { opacity: .6; }

.titlebar { height: 23px; flex: none; display: flex; align-items: center; gap: 6px; padding-left: 4px; background: linear-gradient(90deg, #f0f3f9, #e9f1fb 45%, #e9f5f7 60%, #eaf4f7); }
.applogo { width: 14px; height: 17px; }
.titlebar h1 { font: 12px Roboto, "Noto Sans", sans-serif; color: #111; flex: 1; white-space: nowrap; }
.winctl { display: flex; align-self: stretch; padding-bottom: 3px; margin-right: 2px; }
.winctl button { width: 46px; }
.winctl svg { width: 10px; height: 10px; overflow: visible; }

.tabbar { height: 32px; flex: none; display: flex; background: #d9d9d9; align-items: stretch; }
.quick { width: 228px; display: flex; align-items: center; padding-left: 9px; }
.quick button { gap: 6px; }
.q-file { margin-left: 20px; }
.q-save { margin-left: 18px; }
.q-undo { margin-left: 20px; }
.q-redo { margin-left: 12px; }
.q-home { margin-left: 20px; padding-top: 8px; }
.doctab { flex: 1; margin-top: 4px; background: #f5f5f5; border-radius: 4px 4px 0 0; display: flex; align-items: center; justify-content: center; gap: 5px; font-size: 12px; position: relative; padding-right: 16px; }
.tabclose { position: absolute; right: 7px; top: 10px; }
.status { display: flex; align-items: center; width: 280px; padding-left: 16px; }
.status button { width: 33px; flex: none; }
.status .c-plus { width: 20px; margin-right: 16px; }
.status .c-jobs { gap: 4px; width: 48px; }
.status .c-user { width: 48px; }

.ribbon { height: 85px; flex: none; display: flex; padding: 0 12px; gap: 8px; font-size: 10px; }
.workspace { width: 109px; height: 60px; margin-top: 11px; border: 2px solid #d9d9d9; border-radius: 4px; font-weight: 700; gap: 8px; flex: none; }
.ribtabs { display: flex; gap: 26px; height: 23px; padding-left: 9px; }
.ribtabs button { padding: 2px 12px 0; border-bottom: 3px solid transparent; white-space: nowrap; }
.ribtabs .on { border-bottom-color: #404040; }
.groups { display: flex; }
.group { position: relative; display: flex; flex-direction: column; align-items: center; height: 60px; }
.group:not(:last-child)::after { content: ""; position: absolute; right: 0; top: 4px; height: 50px; width: 1px; background: #d0d0d0; }
.tools { display: flex; height: 39px; }
.tools button { width: 43px; }
.tools svg { width: 32px; height: 32px; }
.tools .active { width: 39px; background: #dcebf4; border: 1px solid #a9d4ec; }
.glabel { height: 20px; gap: 5px; }
.g-create { width: 265px; padding-right: 4px; }
.g-modify { width: 269px; }
.g-assemble { width: 183px; }
.g-configure { width: 104px; }
.g-construct { width: 104px; }
.g-inspect { width: 84px; }
.g-insert { width: 97px; }
.g-select { width: 76px; }

.viewport { position: relative; flex: 1; min-height: 0; overflow: hidden; background: #fff; }
.scene { position: absolute; inset: 0; width: 100%; height: 100%; }
.grid path { fill: none; stroke-width: 1; shape-rendering: crispEdges; }
.grid .minor { stroke: #ececec; }
.grid .major { stroke: #cacaca; }
.grid .axis-x { stroke: #ff8c8c; }
.grid .axis-y { stroke: #8cff8c; }
.body { stroke: #000; stroke-width: 3; stroke-linejoin: round; shape-rendering: crispEdges; }
.blind { --hole: #5c5b56; }
.through { --hole: #fff; }
.bore-hole { fill: var(--hole); }
.viewcube { position: absolute; right: 20px; top: 10px; width: 90px; height: 110px; }
.ax { font-size: 15px; }
.ax.z { fill: #7a7aff; }
.ax.x { fill: #ff7a7a; }
.face { font-size: 10px; font-weight: 700; fill: #80868e; }
.face.small { font-size: 6px; }

.panelhead { width: 299px; height: 24px; display: flex; align-items: center; background: #f5f5f5; border: 1px solid #dcdcdc; padding: 0 11px 0 5px; }
.panelhead h2 { font-size: 11px; line-height: 14px; flex: 1; padding: 2px 0 0 14px; color: #444; }
.browser { position: absolute; left: 4px; top: 4px; }
.tree { padding-top: 4px; }
.tree li { display: flex; align-items: center; height: 24px; padding-left: 34px; }
.tree li.root { padding-left: 16px; }
.chev { width: 12px; height: 12px; }
.chev.open { transform: rotate(90deg); }
.rowbg { display: flex; align-items: center; height: 20px; margin-left: 8px; padding: 0 24px 0 3px; gap: 14px; background: #f5f5f5; }
.rowbg.short { padding-right: 16px; }
.ic { width: 16px; height: 16px; }
.rowbg .ic + .ic { margin-left: -6px; }
.root .rowbg { gap: 5px; padding-right: 8px; }
.sel { display: flex; align-items: center; height: 22px; width: 166px; border: 1px solid #777; background: #94d1ee; }
.cubebox { width: 24px; height: 20px; display: flex; align-items: center; padding-left: 2px; background: #d4d4d4; }
.sel b { padding-left: 9px; }
.rowbg input { appearance: none; margin: 0; width: 13px; height: 13px; border: 1px solid #222; border-radius: 50%; background: radial-gradient(circle, #222 0 3px, #fff 3px); }
.comments { position: absolute; left: 4px; bottom: 5px; }
.comments h2 { padding-left: 22px; }
.navbar { position: absolute; left: 841px; bottom: 6px; height: 24px; display: flex; align-items: center; gap: 6px; padding: 0 3px; background: #f5f5f5; }
.navbar button { gap: 4px; }

.timeline { height: 50px; flex: none; display: flex; align-items: flex-start; }
.transport { display: flex; gap: 11px; padding: 18px 0 0 10px; }
.transport svg { width: 14px; height: 14px; }
.features { display: flex; padding: 16px 0 0 18px; }
.features li { width: 24px; height: 26px; display: flex; justify-content: center; border-bottom: 2px solid #c8c8c8; position: relative; }
.features li::after { content: ""; position: absolute; left: 11px; bottom: 0; width: 2px; height: 5px; background: #c8c8c8; }
.features li:first-child { border-image: linear-gradient(90deg, transparent 50%, #c8c8c8 50%) 2; }
.features li:last-child { border-image: linear-gradient(90deg, #c8c8c8 50%, transparent 50%) 2; }
.features svg { width: 16px; height: 16px; }
.marker { width: 12px; height: 32px; margin: 10px 0 0 -6px; z-index: 1; }
.settings { margin: 17px 13px 0 auto; }

.taskbar { height: 48px; flex: none; display: grid; grid-template-columns: 1fr auto 1fr; align-items: center; border-top: 1px solid #a9b6c6; background: linear-gradient(90deg, #d4e3f4, #d3dff6 30%, #d6e2f2 60%, #d4e9f5); font-family: "Open Sans", "Noto Sans", sans-serif; }
.weather { justify-self: start; padding: 0 0 2px 18px; gap: 2px; text-align: left; line-height: 16px; color: #111; }
.weather small { display: block; font-size: 11px; color: #444; }
.apps { display: flex; align-items: center; }
.apps > button { width: 44px; height: 40px; position: relative; }
.apps > button svg { width: 24px; height: 24px; }
.apps > button svg.big { width: 28px; height: 28px; margin: -4px 0 0 4px; }
.search { display: flex; align-items: center; width: 220px; height: 32px; margin: 0 2px 0 4px; padding: 0 7px 0 10px; gap: 9px; border-radius: 16px; background: #f2f6fd; border: 1px solid #c3d1e6; }
.search input { flex: 1; min-width: 0; border: 0; background: none; padding: 0; font: 13px "Open Sans", sans-serif; }
.search input::placeholder { color: #555; opacity: 1; }
.run::after { content: ""; position: absolute; bottom: 0; left: 19px; width: 6px; height: 3px; border-radius: 2px; background: #7a828c; }
.apps > .cur { width: 38px; margin: 0 3px; background: #edf4fb; border-radius: 4px; }
.cur::after { left: 11px; width: 16px; background: #0a78d4; }
.tray { justify-self: end; display: flex; align-items: center; gap: 14px; padding-right: 21px; }
.tray svg:nth-child(4) { margin-left: -6px; }
.tray time { text-align: right; font-size: 12px; line-height: 16px; color: #111; margin: 0 -6px 0 2px; }
```
FILE: grid.js
```js
// Ground plane: one major cell spans vector X along the red axis and Y along the green axis.
const O = [581.6, 651.4], X = [94.95, 42.71], Y = [156.8, -25.9], DIV = 5, N = 24;
const at = (a, b) => (O[0] + a * X[0] + b * Y[0]).toFixed(1) + " " + (O[1] + a * X[1] + b * Y[1]).toFixed(1);
const seg = (a1, b1, a2, b2) => "M" + at(a1, b1) + "L" + at(a2, b2);
let minor = "", major = "";
for (let i = -N * DIV; i <= N * DIV; i++) {
  const k = i / DIV;
  const d = seg(k, -N, k, N) + seg(-N, k, N, k);
  if (i % DIV) minor += d; else if (i) major += d;
}
document.getElementById("grid-minor").setAttribute("d", minor);
document.getElementById("grid-major").setAttribute("d", major);
document.getElementById("axis-x").setAttribute("d", seg(-N, 0, N, 0));
document.getElementById("axis-y").setAttribute("d", seg(0, -N, 0, N));
```
